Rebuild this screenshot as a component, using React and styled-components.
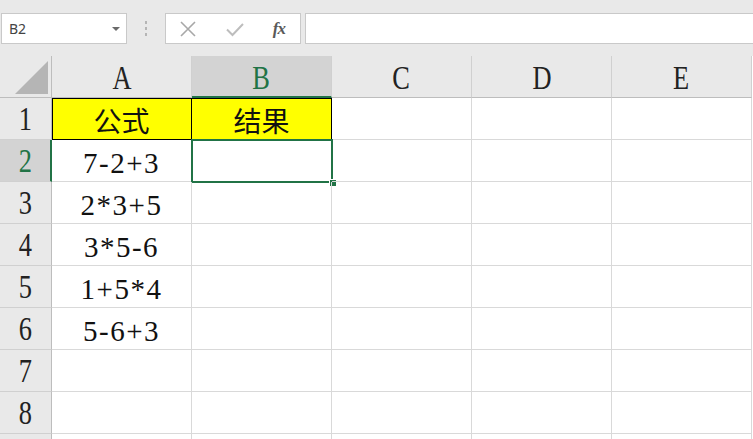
import React from 'react';
import styled, { createGlobalStyle } from 'styled-components';

const GlobalStyle = createGlobalStyle`
  html, body {
    margin: 0;
    padding: 0;
    background: #ffffff;
    overflow: hidden;
  }
`;

const columns = ['A', 'B', 'C', 'D', 'E'];

const rows = [
  { n: 1, cells: ['公式', '结果'], head: true },
  { n: 2, cells: ['7-2+3', ''] },
  { n: 3, cells: ['2*3+5', ''] },
  { n: 4, cells: ['3*5-6', ''] },
  { n: 5, cells: ['1+5*4', ''] },
  { n: 6, cells: ['5-6+3', ''] },
  { n: 7, cells: ['', ''] },
  { n: 8, cells: ['', ''] },
  { n: 9, cells: ['', ''], hidden: true },
];

function App() {
  return (
    <Page>
      <GlobalStyle />
      <Toolbar>
        <NameBox>
          <span>B2</span>
          <Caret />
        </NameBox>
        <Grip>
          <i />
          <i />
          <i />
        </Grip>
        <FxButtons>
          <svg width="18" height="18" viewBox="0 0 18 18">
            <path d="M2 2 L16 16 M16 2 L2 16" stroke="#a8a8a8" strokeWidth="1.6" fill="none" />
          </svg>
          <svg width="20" height="18" viewBox="0 0 20 18">
            <path d="M2 9.5 L7.5 15 L18 4" stroke="#bdbdbd" strokeWidth="2" fill="none" />
          </svg>
          <FxLabel>fx</FxLabel>
        </FxButtons>
        <FormulaInput />
      </Toolbar>

      <Sheet>
        <Corner>
          <Triangle />
        </Corner>
        {columns.map((c) => (
          <ColHead key={c} $active={c === 'B'}>
            <Label>{c}</Label>
          </ColHead>
        ))}

        {rows.map((r) => (
          <React.Fragment key={r.n}>
            <RowHead $active={r.n === 2}>
              {!r.hidden && <Label>{r.n}</Label>}
            </RowHead>
            {columns.map((c, i) => {
              const text = r.cells[i] || '';
              if (r.head && i < 2) {
                return (
                  <TitleCell key={c} $first={i === 0}>
                    {text}
                  </TitleCell>
                );
              }
              return (
                <Cell key={c}>
                  {text}
                  {r.n === 2 && c === 'B' && (
                    <Selection>
                      <Handle />
                    </Selection>
                  )}
                </Cell>
              );
            })}
          </React.Fragment>
        ))}
      </Sheet>
    </Page>
  );
}

export default App;

const Page = styled.div`
  width: 753px;
  height: 439px;
  overflow: hidden;
  background: #ffffff;
`;

const Toolbar = styled.div`
  height: 56px;
  box-sizing: border-box;
  background: #e9e9e9;
  display: flex;
  align-items: flex-start;
  padding: 13px 0 0 1px;
`;

const NameBox = styled.div`
  width: 126px;
  height: 31px;
  box-sizing: border-box;
  background: #ffffff;
  border: 1px solid #c9c9c9;
  display: flex;
  align-items: center;
  justify-content: space-between;
  padding: 0 6px 0 7px;
  font-family: 'Noto Sans', 'Liberation Sans', sans-serif;
  font-size: 14px;
  color: #444444;
`;

const Caret = styled.span`
  width: 0;
  height: 0;
  border-left: 4px solid transparent;
  border-right: 4px solid transparent;
  border-top: 4px solid #6a6a6a;
`;

const Grip = styled.div`
  width: 38px;
  height: 31px;
  display: flex;
  flex-direction: column;
  align-items: center;
  justify-content: center;
  gap: 3px;

  i {
    display: block;
    width: 2px;
    height: 3px;
    background: #b5b5b5;
  }
`;

const FxButtons = styled.div`
  width: 136px;
  height: 31px;
  box-sizing: border-box;
  background: #ffffff;
  border: 1px solid #c9c9c9;
  display: flex;
  align-items: center;
  justify-content: space-between;
  padding: 0 15px 0 13px;
`;

const FxLabel = styled.span`
  font-family: 'Liberation Serif', serif;
  font-style: italic;
  font-weight: bold;
  font-size: 17px;
  color: #5a5a5a;
  letter-spacing: -1px;
`;

const FormulaInput = styled.div`
  flex: 1;
  height: 31px;
  box-sizing: border-box;
  margin-left: 4px;
  background: #ffffff;
  border: 1px solid #c9c9c9;
  border-right: none;
`;

const Sheet = styled.div`
  display: grid;
  grid-template-columns: 52px repeat(5, 140px);
  grid-auto-rows: 42px;
`;

const Label = styled.span`
  display: inline-block;
  font-family: 'Liberation Serif', 'Noto Sans CJK SC', serif;
  font-size: 33px;
  line-height: 1;
  transform: scaleX(0.8);
`;

const HeadBase = styled.div`
  box-sizing: border-box;
  background: #e9e9e9;
  display: flex;
  align-items: center;
  justify-content: center;
  color: #222222;
`;

const Corner = styled(HeadBase)`
  position: relative;
  border-right: 1px solid #bdbdbd;
  border-bottom: 1px solid #bdbdbd;
`;

const Triangle = styled.div`
  position: absolute;
  right: 3px;
  bottom: 3px;
  width: 33px;
  height: 33px;
  background: #b5b5b5;
  clip-path: polygon(100% 0, 100% 100%, 0 100%);
`;

const ColHead = styled(HeadBase)`
  background: ${(p) => (p.$active ? '#d3d3d3' : '#e9e9e9')};
  color: ${(p) => (p.$active ? '#217346' : '#222222')};
  border-right: 1px solid #d0d0d0;
  border-bottom: ${(p) => (p.$active ? '2px solid #217346' : '1px solid #bdbdbd')};
  padding-top: 4px;
`;

const RowHead = styled(HeadBase)`
  background: ${(p) => (p.$active ? '#d3d3d3' : '#e9e9e9')};
  color: ${(p) => (p.$active ? '#217346' : '#222222')};
  border-right: ${(p) => (p.$active ? '2px solid #217346' : '1px solid #bdbdbd')};
  border-bottom: 1px solid #d0d0d0;
  padding-top: 2px;
`;

const Cell = styled.div`
  position: relative;
  box-sizing: border-box;
  border-right: 1px solid #d9d9d9;
  border-bottom: 1px solid #d9d9d9;
  display: flex;
  align-items: center;
  justify-content: center;
  padding-top: 5px;
  font-family: 'Liberation Serif', serif;
  font-size: 29px;
  letter-spacing: 1.5px;
  color: #111111;
`;

const TitleCell = styled(Cell)`
  background: #ffff00;
  border-right: 1px solid #000000;
  border-bottom: 1px solid #000000;
  box-shadow: inset 0 1px 0 #000000 ${(p) => (p.$first ? ', inset 1px 0 0 #000000' : '')};
  font-family: 'Noto Sans CJK SC', sans-serif;
  font-size: 28px;
  letter-spacing: 0;
  padding-top: 2px;
`;

const Selection = styled.div`
  position: absolute;
  top: -1px;
  left: -1px;
  right: -2px;
  bottom: -2px;
  border: 2px solid #217346;
  pointer-events: none;
`;

const Handle = styled.div`
  position: absolute;
  right: -5px;
  bottom: -5px;
  width: 6px;
  height: 6px;
  background: #217346;
  border: 1px solid #ffffff;
  border-right: none;
  border-bottom: none;
`;
